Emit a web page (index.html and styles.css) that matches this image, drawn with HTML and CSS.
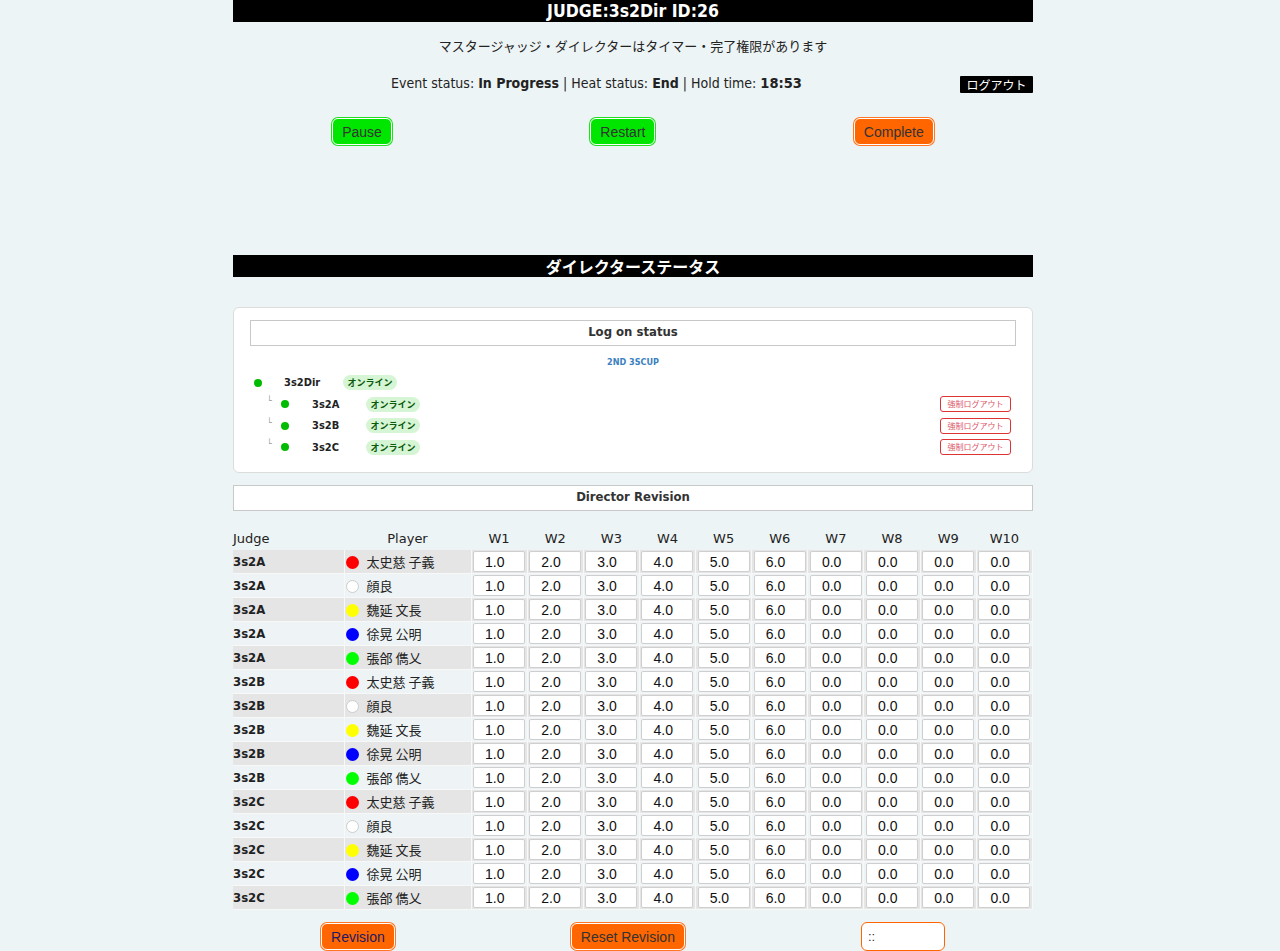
FILE: index.html
```html
<!DOCTYPE html>
<html lang="ja">
<head>
<meta charset="utf-8">
<title>JUDGE:3s2Dir ID:26</title>
<link rel="stylesheet" href="styles.css">
</head>
<body>
<div class="page">
  <h1 class="bar">JUDGE:3s2Dir ID:26</h1>
  <p class="note">マスタージャッジ・ダイレクターはタイマー・完了権限があります</p>
  <div class="status-row">
    <div class="status">Event status: <b>In Progress</b> | Heat status: <b>End</b> | Hold time: <b class="time">18:53</b></div>
    <button class="logout">ログアウト</button>
  </div>
  <div class="actions">
    <button class="btn green">Pause</button>
    <button class="btn green">Restart</button>
    <button class="btn orange">Complete</button>
  </div>

  <h2 class="bar bar2">ダイレクターステータス</h2>

  <div class="card">
    <div class="box-title">Log on status</div>
    <div class="event">2ND 3SCUP</div>
    <ul class="tree">
      <li class="node root"><span class="dot"></span><span class="name">3s2Dir</span><span class="badge">オンライン</span></li>
      <li class="node child"><span class="elbow">└</span><span class="dot"></span><span class="name">3s2A</span><span class="badge">オンライン</span><button class="force">強制ログアウト</button></li>
      <li class="node child"><span class="elbow">└</span><span class="dot"></span><span class="name">3s2B</span><span class="badge">オンライン</span><button class="force">強制ログアウト</button></li>
      <li class="node child"><span class="elbow">└</span><span class="dot"></span><span class="name">3s2C</span><span class="badge">オンライン</span><button class="force">強制ログアウト</button></li>
    </ul>
  </div>

  <div class="box-title box-rev">Director Revision</div>

  <table class="rev">
    <thead>
      <tr><th class="c-judge">Judge</th><th class="c-player">Player</th><th>W1</th><th>W2</th><th>W3</th><th>W4</th><th>W5</th><th>W6</th><th>W7</th><th>W8</th><th>W9</th><th>W10</th></tr>
    </thead>
    <tbody id="rows"></tbody>
  </table>

  <div class="actions bottom">
    <button class="btn orange rev-btn">Revision</button>
    <button class="btn orange">Reset Revision</button>
    <input class="time-input" type="text" value="::">
  </div>
</div>
<script src="app.js"></script>
</body>
</html>
```

FILE: app.js
```js
const judges = ["3s2A", "3s2B", "3s2C"];
const players = [
  ["red", "太史慈 子義"],
  ["white", "顔良"],
  ["yellow", "魏延 文長"],
  ["blue", "徐晃 公明"],
  ["lime", "張郃 儁乂"]
];
const vals = ["1.0","2.0","3.0","4.0","5.0","6.0","0.0","0.0","0.0","0.0"];
const tbody = document.getElementById("rows");
let i = 0;
judges.forEach(j => {
  players.forEach(p => {
    const tr = document.createElement("tr");
    tr.className = i % 2 === 0 ? "odd" : "even";
    let html = '<td class="c-judge">' + j + '</td>' +
      '<td class="c-player"><span class="pdot ' + p[0] + '"></span>' + p[1] + '</td>';
    vals.forEach(v => { html += '<td class="c-w"><input class="w-input" type="text" value="' + v + '"></td>'; });
    tr.innerHTML = html;
    tbody.appendChild(tr);
    i++;
  });
});
```

FILE: styles.css
```css
html, body {
  margin: 0;
  padding: 0;
  background: #edf4f5;
}
body {
  font-family: "DejaVu Sans Condensed", "DejaVu Sans", "Noto Sans CJK JP", sans-serif;
  font-size: 13px;
  color: #222;
}
.page {
  width: 800px;
  margin-left: 233px;
}
.bar {
  margin: 0;
  height: 22px;
  line-height: 22px;
  background: #000;
  color: #fff;
  text-align: center;
  font-size: 17.5px;
  font-weight: bold;
}
.bar2 {
  margin-top: 110px;
  font-size: 16px;
  font-family: "Noto Sans CJK JP", sans-serif;
}
.note {
  margin: 14px 0 0;
  height: 20px;
  line-height: 20px;
  text-align: center;
  font-family: "Noto Sans CJK JP", sans-serif;
  font-size: 13px;
}
.status-row {
  display: flex;
  align-items: center;
  margin-top: 17px;
  height: 20px;
}
.status {
  flex: 1;
  text-align: center;
  font-size: 14px;
}
.status .time { font-size: 14.5px; }
.logout {
  background: #000;
  color: #fff;
  border: 0;
  height: 17px;
  width: 73px;
  padding: 0;
  margin-top: 3px;
  font-family: "Noto Sans CJK JP", sans-serif;
  font-size: 12px;
  line-height: 17px;
  border-radius: 1px;
}
.actions {
  display: flex;
  justify-content: space-around;
  align-items: center;
  margin-top: 25px;
}
.btn {
  height: 27px;
  padding: 0 9px;
  border: 1px solid #fff;
  border-radius: 6px;
  font-family: "Liberation Sans", Arial, sans-serif;
  font-size: 14px;
  color: #333;
}
.green { background: #00e600; box-shadow: 0 0 0 1px #22dd22; }
.orange { background: #ff6600; box-shadow: 0 0 0 1px #ff7722; }
.rev-btn { color: #1a1a66; }

.card {
  margin-top: 30px;
  background: #fff;
  border: 1px solid #dcdcdc;
  border-radius: 6px;
  padding: 12px 16px 10px;
  height: 142px;
}
.box-title {
  line-height: 22px;
  border: 1px solid #c8c8c8;
  background: #fff;
  text-align: center;
  font-weight: bold;
  font-size: 13px;
  color: #333;
  box-sizing: border-box;
  height: 26px;
}
.event {
  margin-top: 10px;
  text-align: center;
  font-size: 9px;
  font-weight: bold;
  color: #3a7fc0;
  line-height: 12px;
}
.tree {
  list-style: none;
  margin: 4px 0 0;
  padding: 0;
}
.node {
  display: flex;
  align-items: center;
  height: 21.5px;
  font-size: 11px;
  font-weight: bold;
}
.dot {
  width: 8px;
  height: 8px;
  border-radius: 50%;
  background: #00bb00;
  flex: none;
}
.root { padding-left: 4px; }
.root .name { margin-left: 22px; width: 59px; }
.child { padding-left: 17px; }
.elbow {
  color: #999;
  font-size: 9px;
  font-weight: normal;
  width: 14px;
  margin-top: -6px;
}
.child .name { margin-left: 23px; width: 54px; }
.badge {
  background: #d5f5d5;
  color: #0a5a0a;
  font-family: "Noto Sans CJK JP", sans-serif;
  font-size: 9px;
  font-weight: bold;
  border-radius: 8px;
  padding: 0 4.5px;
  line-height: 15px;
  height: 15px;
}
.force {
  margin-left: auto;
  margin-right: 5px;
  background: #fff;
  border: 1px solid #dd3333;
  border-radius: 3px;
  color: #dd5566;
  font-family: "Noto Sans CJK JP", sans-serif;
  font-size: 8px;
  height: 16px;
  width: 71px;
  padding: 0;
  line-height: 14px;
}
.box-rev {
  margin-top: 12px;
}
.rev {
  width: 800px;
  margin-top: 20px;
  border-collapse: collapse;
  table-layout: fixed;
}
.rev th {
  font-family: "DejaVu Sans", sans-serif;
  font-weight: normal;
  font-size: 13px;
  height: 19px;
  line-height: 15px;
  padding: 0;
  text-align: center;
  vertical-align: top;
}
.rev th.c-judge { text-align: left; width: 111px; }
.rev th.c-player { width: 127px; }
.rev td {
  height: 23px;
  padding: 0;
  border-bottom: 1px solid #f7f9f9;
  border-right: 1px solid #f7f9f9;
}
.rev tr.odd td { background: #e5e5e5; }
.rev tr.even td { background: #eef4f6; }
.c-judge { font-weight: bold; font-size: 13px; }
td.c-player {
  font-family: "Noto Sans CJK JP", sans-serif;
  font-size: 13px;
  padding-left: 1px;
}
.pdot {
  display: inline-block;
  width: 13px;
  height: 13px;
  border-radius: 50%;
  vertical-align: -2px;
  margin-right: 8px;
}
.pdot.red { background: #ff0000; }
.pdot.white { background: #fff; border: 1px solid #ccc; width: 11px; height: 11px; }
.pdot.yellow { background: #ffff00; }
.pdot.blue { background: #0000ff; }
.pdot.lime { background: #00ff00; }
.c-w { text-align: center; }
.w-input {
  width: 52px;
  height: 21px;
  box-sizing: border-box;
  border: 1px solid #cfcfcf;
  border-radius: 2px;
  background: #fff;
  padding: 0 0 0 11px;
  font-family: "Liberation Sans", Arial, sans-serif;
  font-size: 14px;
  color: #111;
  display: block;
  margin: 0 auto;
}
.bottom {
  margin-top: 12px;
}
.time-input {
  width: 84px;
  height: 29px;
  box-sizing: border-box;
  border: 1px solid #ff6600;
  border-radius: 6px;
  background: #fff;
  padding: 0 6px;
  font-family: "Liberation Sans", Arial, sans-serif;
  font-size: 13px;
  color: #333;
}
```
